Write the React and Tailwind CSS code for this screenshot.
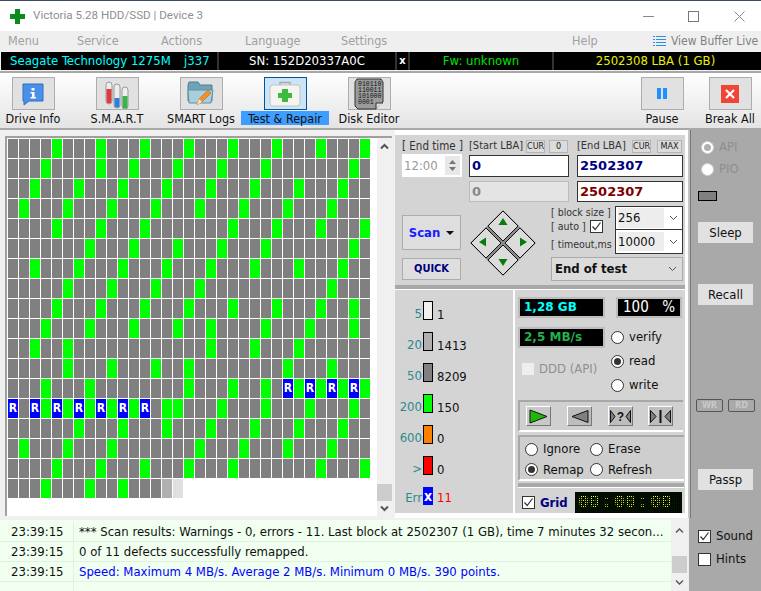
import React from 'react';

const GREEN = [
  [4, 8, 12, 16, 20, 24, 28, 32],
  [3, 8, 11, 15, 19, 23, 31],
  [2, 6, 10, 14, 18, 22, 26, 30],
  [1, 5, 9, 13, 17, 21, 25, 29],
  [4, 8, 12, 20, 24, 28, 32],
  [7, 11, 15, 19, 23, 31],
  [2, 6, 10, 14, 18, 22, 26, 30],
  [5, 9, 13, 17, 29],
  [4, 8, 12, 16, 20, 24, 28, 31],
  [3, 7, 11, 15, 18, 23, 27, 31],
  [2, 5, 18, 22, 26],
  [5, 9, 13, 16, 25, 29],
  [3, 7, 16, 20, 23, 26, 28, 30, 32],
  [3, 5, 7, 9, 11, 14, 15, 19, 23, 27, 31],
  [6, 10, 14, 18, 22, 26, 30],
  [1, 5, 9, 17, 21, 25, 29],
  [4, 8, 12, 16, 20, 28, 32],
  [3, 7, 10],
];

const REMAP = {
  12: [25, 27, 29, 31],
  13: [0, 2, 4, 6, 8, 10, 12],
};

function Cell({ row, col }) {
  if (row === 17 && col > 15) return <div className="bg-white" />;
  if (row === 17 && col === 14) return <div className="bg-[#b0b0b0]" />;
  if (row === 17 && col === 15) return <div className="bg-[#e0e0e0]" />;
  if (REMAP[row]?.includes(col)) {
    return <div className="bg-[#0000ff] text-white font-bold text-[12px] leading-[19px] text-center">R</div>;
  }
  return <div className={GREEN[row].includes(col) ? 'bg-[#00ff00]' : 'bg-[#808080]'} />;
}

function ToolButton({ label, active, children }) {
  return (
    <div className="w-[84px] flex flex-col items-center">
      <div className={`w-[43px] h-[33px] border flex items-center justify-center ${active ? 'border-[#005499] bg-[#cce4f7]' : 'border-[#adadad] bg-[#e1e1e1]'}`}>
        {children}
      </div>
      <div className={`mt-px h-[14px] leading-[16px] text-[12.5px] text-[#111] text-center whitespace-nowrap ${active ? 'bg-[#3d9eff] w-[88px]' : ''}`}>
        {label}
      </div>
    </div>
  );
}

function Radio({ checked, dim }) {
  return (
    <span className={`w-[13px] h-[13px] rounded-full border bg-white flex items-center justify-center shrink-0 ${dim ? 'border-[#cfcfcf]' : 'border-[#333]'}`}>
      {checked && <span className={`w-[7px] h-[7px] rounded-full ${dim ? 'bg-[#b0b0b0]' : 'bg-[#333]'}`} />}
    </span>
  );
}

function Check({ checked }) {
  return (
    <span className="w-[13px] h-[13px] border border-[#333] bg-white flex items-center justify-center shrink-0">
      {checked && (
        <svg width="11" height="11" viewBox="0 0 11 11"><path d="M1.5 5.5 L4.2 8.5 L9.5 1.5" fill="none" stroke="#333" strokeWidth="1.2" /></svg>
      )}
    </span>
  );
}

function Chevron() {
  return (
    <svg width="9" height="6" viewBox="0 0 9 6"><path d="M1 1 L4.5 4.5 L8 1" fill="none" stroke="#555" strokeWidth="1" /></svg>
  );
}

function LegendRow({ label, value, box }) {
  return (
    <div className="h-[31px] flex items-start">
      <div className="w-[26px] pt-[5px] text-right text-[13px] leading-[16px] text-[#2b8a8f]">{label}</div>
      <div className={`ml-[1px] w-[10px] h-[19px] border border-black ${box}`} />
      <div className="ml-[4px] pt-[6px] text-[13px] leading-[16px] text-[#111]">{value}</div>
    </div>
  );
}

function SideButton({ children, className = '' }) {
  return (
    <div className={`w-[55px] h-[21px] bg-[#e1e1e1] text-[13px] leading-[21px] text-center text-[#111] ${className}`}>{children}</div>
  );
}

function Small({ children, className = '' }) {
  return (
    <div className={`h-[13px] border border-[#b5b5b5] bg-[#dcdcdc] text-[9px] leading-[11px] text-center text-[#222] ${className}`}>{children}</div>
  );
}

function Diamond() {
  const pad = 'fill-[#dcdcdc] stroke-[#111]';
  return (
    <svg width="68" height="68" viewBox="0 0 68 68" className="block">
      <path d="M34 1 L67 34 L34 67 L1 34 Z" fill="#8a8a8a" />
      <path d="M34 2 L49 17 L34 32 L19 17 Z" className={pad} />
      <path d="M51 19 L66 34 L51 49 L36 34 Z" className={pad} />
      <path d="M34 36 L49 51 L34 66 L19 51 Z" className={pad} />
      <path d="M2 34 L17 19 L32 34 L17 49 Z" className={pad} />
      <path d="M34 9 L38.5 16 L29.5 16 Z" fill="#0a7a0a" />
      <path d="M34 57 L38.5 50 L29.5 50 Z" fill="#0a7a0a" />
      <path d="M10 33 L17 28.5 L17 37.5 Z" fill="#0a7a0a" />
      <path d="M58 33 L51 28.5 L51 37.5 Z" fill="#0a7a0a" />
    </svg>
  );
}

function TransportButton({ children, className = '' }) {
  return (
    <div className={`w-[25px] h-[20px] border-t border-l border-white border-r border-b border-r-[#777] border-b-[#777] bg-[#bdbdbd] flex items-center justify-center ${className}`}>
      {children}
    </div>
  );
}

function LogRow({ time, children, className = 'text-[#111]' }) {
  return (
    <div className="h-[20px] flex border-b border-[#dff2df] text-[13px] leading-[19px]">
      <div className="w-[74px] pl-[11px] border-r border-[#dff2df] text-[#111]">{time}</div>
      <div className={`pl-[5px] whitespace-nowrap ${className}`}>{children}</div>
    </div>
  );
}

function Timer() {
  return (
    <div className="relative ml-auto mr-[3px] w-[107px] h-[21px] bg-black text-[#ffff00] font-['Liberation_Mono',monospace] font-bold text-[18px] leading-[21px] flex pl-[3px] overflow-hidden">
      <span className="w-[21px]">00</span>
      <span className="w-[15px] text-center">:</span>
      <span className="w-[21px]">00</span>
      <span className="w-[15px] text-center">:</span>
      <span className="w-[21px]">00</span>
      {/* LED dot mask over the digits */}
      <div className="absolute inset-0 bg-[repeating-linear-gradient(90deg,transparent_0,transparent_1px,#011001_1px,#011001_2px),repeating-linear-gradient(0deg,transparent_0,transparent_1px,#011001_1px,#011001_2px)]" />
    </div>
  );
}

export default function App() {
  return (
    <div className="w-[761px] h-[591px] overflow-hidden bg-[#f0f0f0] font-['DejaVu_Sans_Condensed','DejaVu_Sans',sans-serif] flex flex-col">
      {/* title bar */}
      <div className="h-[31px] bg-white border-t border-[#3b4a68] flex items-center shrink-0">
        <svg width="15" height="15" viewBox="0 0 15 15" className="ml-[10px]">
          <path d="M5 0 H10 V5 H15 V10 H10 V15 H5 V10 H0 V5 H5 Z" fill="#0d8c1e" />
        </svg>
        <div className="ml-[8px] font-['Roboto',sans-serif] text-[11.6px] text-[#8f8f8f]">Victoria 5.28 HDD/SSD | Device 3</div>
        <div className="ml-auto flex items-center pr-[16px]">
          <div className="w-[11px] h-px bg-[#888]" />
          <div className="ml-[34px] w-[11px] h-[11px] border border-[#777]" />
          <svg width="11" height="11" viewBox="0 0 11 11" className="ml-[35px]"><path d="M0.5 0.5 L10.5 10.5 M10.5 0.5 L0.5 10.5" stroke="#888" /></svg>
        </div>
      </div>

      {/* menu */}
      <div className="h-[20px] bg-[#efefef] flex items-center text-[12.5px] text-[#a0a0a0] shrink-0 pl-[8px]">
        <span className="w-[69px]">Menu</span>
        <span className="w-[84px]">Service</span>
        <span className="w-[84px]">Actions</span>
        <span className="w-[96px]">Language</span>
        <span className="w-[231px]">Settings</span>
        <span className="w-[81px]">Help</span>
        <svg width="13" height="13" viewBox="0 0 13 13" className="mr-[5px]">
          <path d="M3 1.5 H13 M3 4.5 H13 M3 7.5 H13 M3 10.5 H13 M0 1.5 H2 M0 4.5 H2 M0 7.5 H2 M0 10.5 H2" stroke="#2b8fe8" />
        </svg>
        <span className="text-[12px] text-[#808080] whitespace-nowrap">View Buffer Live</span>
      </div>

      {/* drive info */}
      <div className="h-[18px] mt-px bg-black flex text-[13px] leading-[17px] shrink-0 ml-px">
        <div className="w-[216px] text-[#00ffff] flex pl-[9px]">
          <span className="w-[174px] whitespace-nowrap">Seagate Technology 1275M</span>
          <span>j337</span>
        </div>
        <div className="w-[2px] bg-[#333]" />
        <div className="w-[176px] text-white text-center whitespace-nowrap">SN: 152D20337A0C</div>
        <div className="w-[2px] bg-[#333]" />
        <div className="w-[11px] text-white text-center font-bold text-[11px]">x</div>
        <div className="w-[2px] bg-[#333]" />
        <div className="w-[142px] text-[#00e000] text-center">Fw: unknown</div>
        <div className="w-[2px] bg-[#333]" />
        <div className="flex-1 text-[#e8f000] text-center pr-[4px]">2502308 LBA (1 GB)</div>
      </div>

      {/* toolbar */}
      <div className="h-[59px] mt-[1px] border-t-2 border-b-2 border-[#a8a8a8] bg-gradient-to-b from-white to-[#e4e4e4] flex pt-[4px] shrink-0">
        <div className="flex -ml-[9px]">
          <ToolButton label="Drive Info">
            <svg width="24" height="24" viewBox="0 0 24 24">
              <path d="M2 2 H22 V19 H8 L3 23 V19 H2 Z" fill="#4a90e8" stroke="#2f6fc0" />
              <rect x="10.5" y="6" width="3" height="2.5" fill="#fff" />
              <path d="M9.5 10 H13.5 V15 H15 V16.5 H9.5 V15 H11 V11.5 H9.5 Z" fill="#fff" />
            </svg>
          </ToolButton>
          <ToolButton label="S.M.A.R.T">
            <svg width="30" height="30" viewBox="0 0 30 30">
              <rect x="4" y="3" width="6" height="22" rx="3" fill="#eee" stroke="#999" />
              <path d="M4.5 10 H9.5 V22 A2.5 2.5 0 0 1 4.5 22 Z" fill="#e03a3a" />
              <rect x="12" y="5" width="6" height="24" rx="3" fill="#eee" stroke="#999" />
              <path d="M12.5 19 H17.5 V26 A2.5 2.5 0 0 1 12.5 26 Z" fill="#2f7fe0" />
              <rect x="20" y="8" width="6" height="22" rx="3" fill="#eee" stroke="#999" />
              <path d="M20.5 17 H25.5 V27 A2.5 2.5 0 0 1 20.5 27 Z" fill="#38b54a" />
            </svg>
          </ToolButton>
          <ToolButton label="SMART Logs">
            <svg width="30" height="28" viewBox="0 0 30 28">
              <path d="M2 5 L3 2 H12 L14 5 H26 V21 H2 Z" fill="#6fa3b8" stroke="#4d7f94" />
              <path d="M2 10 H27 L25 23 H3 Z" fill="#a9cfdd" stroke="#5d91a6" />
              <path d="M11 25 L13 19 L22 10 L25 13 L16 22 Z" fill="#f09030" stroke="#b86a1a" strokeWidth="0.6" />
              <path d="M11 25 L13 19 L16 22 Z" fill="#f5e6c8" />
            </svg>
          </ToolButton>
          <ToolButton label="Test & Repair" active>
            <svg width="32" height="26" viewBox="0 0 32 26">
              <path d="M11 4 V1.5 H21 V4" fill="none" stroke="#aaa" strokeWidth="1.5" />
              <rect x="1" y="4" width="30" height="21" rx="3" fill="#f4f4f0" stroke="#c4c4c0" />
              <path d="M13 8 H19 V12 H23 V17 H19 V21 H13 V17 H9 V12 H13 Z" fill="#3dbb3d" />
            </svg>
          </ToolButton>
          <ToolButton label="Disk Editor">
            <svg width="30" height="32" viewBox="0 0 30 32">
              <path d="M3 1 H27 L29 4 V24 L22 31 H4 L1 28 V4 Z" fill="#9b9b9b" stroke="#333" />
              <path d="M22 31 V25 H29" fill="#ddd" stroke="#333" />
              <text x="4" y="8" fontSize="6.5" fontFamily="Liberation Mono" fill="#111">010110</text>
              <text x="4" y="14" fontSize="6.5" fontFamily="Liberation Mono" fill="#111">110011</text>
              <text x="4" y="20" fontSize="6.5" fontFamily="Liberation Mono" fill="#111">101000</text>
              <text x="4" y="26" fontSize="6.5" fontFamily="Liberation Mono" fill="#111">0001</text>
            </svg>
          </ToolButton>
        </div>
        <div className="ml-auto flex -mr-[3px]">
          <div className="w-[68px] flex flex-col items-center">
            <div className="w-[43px] h-[33px] border border-[#adadad] bg-[#e1e1e1] flex items-center justify-center gap-[2px]">
              <div className="w-[4px] h-[11px] bg-[#1e90ff]" />
              <div className="w-[4px] h-[11px] bg-[#1e90ff]" />
            </div>
            <div className="mt-px h-[14px] leading-[16px] text-[12.5px] text-[#111]">Pause</div>
          </div>
          <div className="w-[68px] flex flex-col items-center">
            <div className="w-[43px] h-[33px] border border-[#adadad] bg-[#e1e1e1] flex items-center justify-center">
              <div className="w-[18px] h-[18px] bg-[#f04438] flex items-center justify-center">
                <svg width="10" height="10" viewBox="0 0 10 10"><path d="M1 1 L9 9 M9 1 L1 9" stroke="#fff" strokeWidth="2.2" /></svg>
              </div>
            </div>
            <div className="mt-px h-[14px] leading-[16px] text-[12.5px] text-[#111] whitespace-nowrap">Break All</div>
          </div>
        </div>
      </div>

      {/* main */}
      <div className="h-[388px] flex shrink-0">
        <div className="w-[395px] pl-[5px] pt-[6px] pr-[3px] pb-[2px]">
          <div className="h-full border-t-2 border-l-2 border-[#a0a0a0] bg-white flex">
            <div className="flex-1 pl-px pt-px">
              <div className="grid grid-cols-[repeat(33,10px)] auto-rows-[19px] gap-px">
                {GREEN.map((_, row) =>
                  Array.from({ length: 33 }, (_, col) => <Cell key={`${row}-${col}`} row={row} col={col} />)
                )}
              </div>
            </div>
            <div className="w-[15px] bg-[#f0f0f0] flex flex-col items-center">
              <svg width="9" height="7" viewBox="0 0 9 7" className="mt-[5px]"><path d="M1 5.5 L4.5 2 L8 5.5" fill="none" stroke="#555" strokeWidth="2" /></svg>
              <div className="mt-auto w-full h-[17px] bg-[#cdcdcd]" />
              <svg width="9" height="7" viewBox="0 0 9 7" className="my-[4px]"><path d="M1 1.5 L4.5 5 L8 1.5" fill="none" stroke="#555" strokeWidth="2" /></svg>
            </div>
          </div>
        </div>

        <div className="w-[295px] bg-white pt-[5px] pr-[3px] border-r-2 border-[#c4c4c4]">
          {/* LBA section */}
          <div className="h-[150px] bg-[#d4d4d4] flex pl-[7px] pt-[4px]">
            <div className="w-[67px]">
              <div className="h-[15px] text-[11.5px] leading-[15px] text-[#333] text-center w-[59px] whitespace-nowrap">[ End time ]</div>
              <div className="w-[60px] h-[23px] bg-white flex items-center text-[13px] text-[#999] pl-[2px]">
                <span>12:00</span>
                <div className="ml-auto mr-[2px] w-[15px] h-[19px] bg-[#e8e8e8] flex flex-col items-center justify-center gap-[3px]">
                  <svg width="7" height="4" viewBox="0 0 7 4"><path d="M0 4 L3.5 0 L7 4 Z" fill="#777" /></svg>
                  <svg width="7" height="4" viewBox="0 0 7 4"><path d="M0 0 L3.5 4 L7 0 Z" fill="#777" /></svg>
                </div>
              </div>
              <div className="mt-[38px] w-[59px] h-[35px] border border-[#adadad] bg-[#dedede] flex items-center justify-center gap-[6px]">
                <span className="text-[13px] font-bold text-[#1a1aff]">Scan</span>
                <svg width="8" height="4" viewBox="0 0 8 4"><path d="M0 0 H8 L4 4 Z" fill="#111" /></svg>
              </div>
              <div className="mt-[8px] w-[59px] h-[22px] border border-[#adadad] bg-[#dedede] text-[11px] font-bold leading-[20px] text-center text-[#000080]">QUICK</div>
            </div>

            <div className="flex-1 flex flex-col">
              <div className="flex">
                <div className="w-[108px]">
                  <div className="h-[15px] flex items-center">
                    <span className="w-[57px] text-[11px] text-[#333] whitespace-nowrap">[Start LBA]</span>
                    <Small className="w-[19px]">CUR</Small>
                    <Small className="ml-[4px] w-[19px]">0</Small>
                  </div>
                  <div className="mt-px w-[100px] h-[22px] border border-[#333] bg-white font-['DejaVu_Sans',sans-serif] font-bold text-[13px] leading-[20px] pl-[2px] text-[#000080]">0</div>
                  <div className="mt-[4px] w-[100px] h-[21px] border border-[#bbb] bg-[#e4e4e4] font-['DejaVu_Sans',sans-serif] font-bold text-[13px] leading-[19px] pl-[2px] text-[#888]">0</div>
                </div>
                <div className="w-[106px]">
                  <div className="h-[15px] flex items-center">
                    <span className="w-[55px] text-[11px] text-[#333] whitespace-nowrap">[End LBA]</span>
                    <Small className="w-[19px]">CUR</Small>
                    <Small className="ml-[6px] w-[25px]">MAX</Small>
                  </div>
                  <div className="mt-px h-[22px] border border-[#333] bg-white font-['DejaVu_Sans',sans-serif] font-bold text-[13px] leading-[20px] pl-[2px] text-[#000080]">2502307</div>
                  <div className="mt-[4px] h-[21px] border border-[#333] bg-white font-['DejaVu_Sans',sans-serif] font-bold text-[13px] leading-[19px] pl-[2px] text-[#800000]">2502307</div>
                </div>
              </div>

              <div className="flex mt-[4px]">
                <div className="w-[82px] mt-[3px]"><Diamond /></div>
                <div className="w-[132px]">
                  <div className="flex">
                    <div className="w-[64px] text-[10.5px] text-[#333] whitespace-nowrap">
                      <div className="h-[13px] leading-[13px]">[ block size ]</div>
                      <div className="h-[14px] leading-[14px] flex items-center">
                        <span className="w-[39px]">[ auto ]</span>
                        <Check checked />
                      </div>
                      <div className="mt-[4px] h-[15px] leading-[15px]">[ timeout,ms ]</div>
                    </div>
                    <div className="w-[68px] flex flex-col">
                      <div className="h-[24px] border border-[#333] bg-white flex items-center text-[13px] text-[#111]">
                        <span className="ml-[2px] w-[46px] bg-[#ededed]">256</span>
                        <span className="ml-[5px]"><Chevron /></span>
                      </div>
                      <div className="h-[24px] border border-[#333] border-t-0 bg-white flex items-center text-[13px] text-[#111]">
                        <span className="ml-[2px] w-[46px] bg-[#ededed]">10000</span>
                        <span className="ml-[5px]"><Chevron /></span>
                      </div>
                    </div>
                  </div>
                  <div className="mt-[3px] h-[24px] border border-[#aaa] bg-[#dcdcdc] flex items-center pl-[3px]">
                    <span className="text-[13px] font-bold text-[#111]">End of test</span>
                    <span className="ml-auto mr-[5px]"><Chevron /></span>
                  </div>
                </div>
              </div>
            </div>
          </div>

          <div className="h-[4px] bg-[#a8a8a8]" />
          <div className="h-px bg-white" />

          {/* lower section */}
          <div className="flex h-[225px] border-b-2 border-white">
            <div className="w-[120px] bg-[#d4d4d4] border-r-2 border-white pt-[11px] pl-[1px]">
              <LegendRow label="5" value="1" box="bg-[#f0f0f0]" />
              <LegendRow label="20" value="1413" box="bg-[#b0b0b0]" />
              <LegendRow label="50" value="8209" box="bg-[#808080]" />
              <LegendRow label="200" value="150" box="bg-[#00ff00]" />
              <LegendRow label="600" value="0" box="bg-[#ff8000]" />
              <LegendRow label=">" value="0" box="bg-[#ff0000]" />
              <div className="h-[20px] flex items-start">
                <div className="w-[26px] pt-[3px] text-right text-[13px] leading-[16px] text-[#2b8a8f]">Err</div>
                <div className="ml-[1px] w-[10px] h-[18px] bg-[#0000ff] flex items-center justify-center text-white font-bold text-[14px] leading-none">x</div>
                <div className="ml-[4px] pt-[3px] text-[13px] leading-[16px] text-[#ff0000]">11</div>
              </div>
            </div>

            <div className="flex-1 bg-[#d4d4d4] pt-[7px]">
              <div className="flex items-start pl-[3px]">
                <div className="w-[87px] h-[21px] border-2 border-[#bdbdbd] bg-black text-[#00ffff] font-['DejaVu_Sans',sans-serif] font-bold text-[12px] leading-[17px] pl-[4px]">1,28 GB</div>
                <div className="ml-[11px] w-[66px] h-[21px] border-2 border-[#bdbdbd] bg-black text-white text-[15px] leading-[17px] flex justify-between px-[5px]"><span>100</span><span>%</span></div>
              </div>
              <div className="flex pl-[3px]">
                <div className="w-[93px]">
                  <div className="mt-[9px] w-[87px] h-[21px] border-2 border-[#bdbdbd] bg-black text-[#22b14c] font-['DejaVu_Sans',sans-serif] font-bold text-[12px] leading-[17px] pl-[4px]">2,5 MB/s</div>
                  <div className="mt-[11px] ml-[4px] flex items-center gap-[5px]">
                    <div className="w-[12px] h-[12px] bg-[#eee]" />
                    <span className="text-[13px] text-[#909090] whitespace-nowrap">DDD (API)</span>
                  </div>
                </div>
                <div className="mt-[11px] flex flex-col text-[13px] text-[#111] gap-[8px]">
                  <div className="h-[16px] flex items-center gap-[5px]"><Radio />verify</div>
                  <div className="h-[16px] flex items-center gap-[5px]"><Radio checked />read</div>
                  <div className="h-[16px] flex items-center gap-[5px]"><Radio />write</div>
                </div>
              </div>

              <div className="mt-[7px] ml-[3px] w-[165px] h-[32px] border-t-2 border-l-2 border-[#a8a8a8] border-b-2 border-b-white bg-[#d0d0d0] flex items-center pl-[6px]">
                <TransportButton className="bg-[#c8c8c8]">
                  <svg width="19" height="15" viewBox="0 0 19 15"><path d="M1 1 L18 7.5 L1 14 Z" fill="#22b80a" stroke="#111" /></svg>
                </TransportButton>
                <TransportButton className="ml-[16px]">
                  <svg width="18" height="13" viewBox="0 0 18 13"><path d="M17 0.5 L1 6.5 L17 12.5 Z" fill="#808080" stroke="#111" /></svg>
                </TransportButton>
                <TransportButton className="ml-[16px]">
                  <svg width="21" height="13" viewBox="0 0 21 13"><path d="M0.5 0.5 L5 6.5 L0.5 12.5 Z M20.5 0.5 L16 6.5 L20.5 12.5 Z" fill="#808080" stroke="#111" /><text x="10.5" y="11" textAnchor="middle" fontSize="12" fontWeight="bold" fontFamily="Liberation Sans" fill="#111">?</text></svg>
                </TransportButton>
                <TransportButton className="ml-[15px]">
                  <svg width="21" height="13" viewBox="0 0 21 13"><path d="M0.5 0.5 L6 6.5 L0.5 12.5 Z M20.5 0.5 L15 6.5 L20.5 12.5 Z" fill="#808080" stroke="#111" /><path d="M10.5 0 V13" stroke="#111" strokeWidth="2" /></svg>
                </TransportButton>
              </div>

              <div className="mt-[3px] ml-[3px] w-[166px] h-[46px] border-t-2 border-l-2 border-[#a8a8a8] border-b-2 border-b-white bg-[#cecece] text-[13px] text-[#111] grid grid-cols-[65px_1fr] auto-rows-min pl-[5px] pt-[2px]">
                <div className="h-[20px] flex items-center gap-[5px]"><Radio />Ignore</div>
                <div className="h-[20px] flex items-center gap-[5px]"><Radio />Erase</div>
                <div className="h-[21px] flex items-center gap-[5px]"><Radio checked />Remap</div>
                <div className="h-[21px] flex items-center gap-[5px]"><Radio />Refresh</div>
              </div>

              <div className="mt-[2px] ml-[3px] w-[166px] h-[5px] bg-[#a8a8a8] border-b border-white" />

              <div className="mt-[4px] flex items-center pl-[7px]">
                <Check checked />
                <span className="ml-[5px] font-bold text-[13px] text-[#000080]">Grid</span>
                <Timer />
              </div>
            </div>
          </div>
        </div>

        {/* sidebar */}
        <div className="flex-1 bg-[#a9a9a9] border-l border-[#777] pl-[7px] pt-[10px]">
          <div className="flex items-center gap-[5px] text-[13px] text-[#8e8e8e] pl-[3px] h-[14px]"><Radio checked dim />API</div>
          <div className="mt-[8px] flex items-center gap-[5px] text-[13px] text-[#8e8e8e] pl-[3px] h-[14px]"><Radio dim />PIO</div>
          <div className="mt-[15px] w-[19px] h-[10px] border border-black bg-[#808080]" />
          <SideButton className="mt-[21px]">Sleep</SideButton>
          <SideButton className="mt-[41px]">Recall</SideButton>
          <div className="mt-[94px] -ml-[2px] flex gap-[5px]">
            <div className="w-[27px] h-[13px] rounded-[2px] border border-[#555] text-[9px] leading-[11px] font-bold text-center text-[#c8c8c8]">WR</div>
            <div className="w-[27px] h-[13px] rounded-[2px] border border-[#555] text-[9px] leading-[11px] font-bold text-center text-[#c8c8c8]">RD</div>
          </div>
          <SideButton className="mt-[57px]">Passp</SideButton>
        </div>
      </div>

      {/* log */}
      <div className="flex-1 flex min-h-0">
        <div className="w-[688px] mt-[2px] bg-[#f0fff0] flex">
          <div className="flex-1 pt-[2px]">
            <LogRow time="23:39:15">*** Scan results: Warnings - 0, errors - 11. Last block at 2502307 (1 GB), time 7 minutes 32 secon...</LogRow>
            <LogRow time="23:39:15">0 of 11 defects successfully remapped.</LogRow>
            <LogRow time="23:39:15" className="text-[#0000ff]">Speed: Maximum 4 MB/s. Average 2 MB/s. Minimum 0 MB/s. 390 points.</LogRow>
            <div className="w-[74px] h-[10px] border-r border-[#dff2df]" />
          </div>
          <div className="w-[17px] bg-[#f0f0f0] flex flex-col items-center">
            <svg width="9" height="7" viewBox="0 0 9 7" className="mt-[7px]"><path d="M1 5.5 L4.5 2 L8 5.5" fill="none" stroke="#555" strokeWidth="1.4" /></svg>
            <div className="mt-[22px] w-[15px] h-[17px] bg-[#cdcdcd]" />
            <svg width="9" height="7" viewBox="0 0 9 7" className="mt-auto mb-[5px]"><path d="M1 1.5 L4.5 5 L8 1.5" fill="none" stroke="#555" strokeWidth="1.4" /></svg>
          </div>
        </div>
        <div className="flex-1 ml-px bg-[#a9a9a9] pt-[10px] pl-[9px] text-[13px] text-[#111]">
          <div className="flex items-center gap-[5px] h-[16px]"><Check checked />Sound</div>
          <div className="mt-[7px] flex items-center gap-[5px] h-[16px]"><Check />Hints</div>
        </div>
      </div>
    </div>
  );
}
